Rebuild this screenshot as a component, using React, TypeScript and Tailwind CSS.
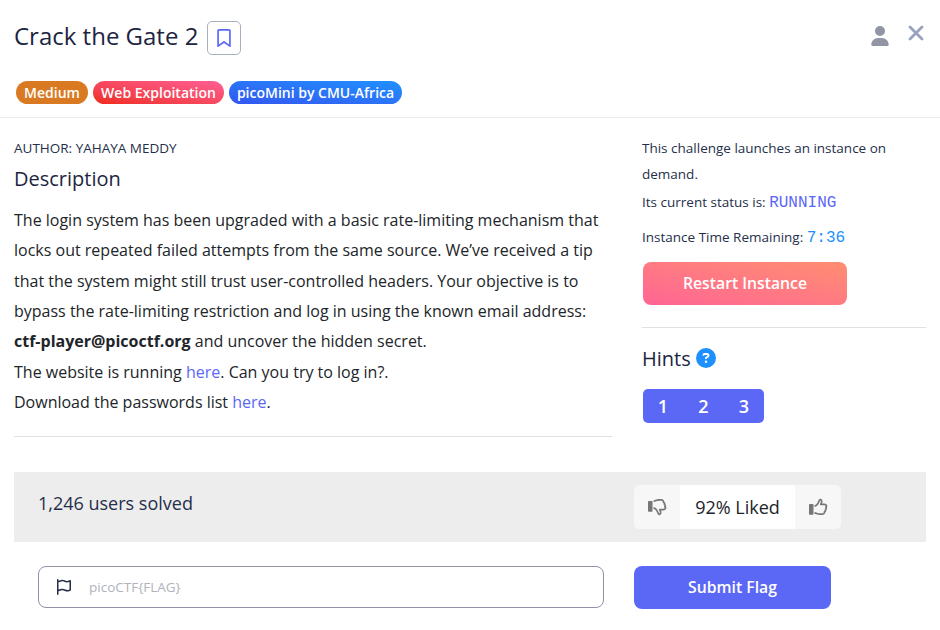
import React from "react";
import { FaUser, FaRegBookmark, FaRegFlag, FaCircleQuestion } from "react-icons/fa6";

function Thumb({ down = false }: { down?: boolean }) {
  return (
    <svg viewBox="0 0 20 20" className={down ? "size-5 -scale-y-100" : "size-5"} fill="none">
      <rect x="1" y={down ? 5.3 : 7} width="4.500" height="10.800" rx=".8" fill="#777" />
      <path d="M6.500 9.300 L8 8.600 C9.500 7.300 10.700 6 11.200 3.600 C11.500 2.300 13.700 2.200 13.700 4.500 C13.700 5.600 13 6.500 12.800 7.400 H16.500 C18.600 7.400 18.900 9.200 17.900 10.200 C18.500 11.100 18.100 12.100 17.400 12.600 C17.700 13.600 17.200 14.400 16.500 14.700 C16.600 16.200 15.700 17.200 14 17.200 H12 C9.500 17.200 8.500 16 6.500 15.800" stroke="#777" strokeWidth="1.700" strokeLinejoin="round" />
    </svg>
  );
}

export default function App() {
  return (
    <main className="h-[630px] w-[940px] overflow-hidden bg-white font-['Open_Sans',sans-serif] text-[#212529]">
      <header className="h-[118px] border-b border-[#e9ecef] px-[14px] pt-[21px]">
        <div className="flex h-[34px] items-start justify-between">
          <div className="flex">
            <h1 className="text-2xl leading-[29px] text-[#1d253f]">Crack the Gate 2</h1>
            <button className="ml-[9px] flex h-[34px] w-[34px] items-center justify-center rounded-[5px] border border-[#a9afbd] text-[#5b68f6]">
              <FaRegBookmark className="size-[18px]" />
            </button>
          </div>
          <div className="flex items-start">
            <FaUser className="mt-[5px] size-5 text-[#9295a3]" />
            <svg viewBox="0 0 16 16" className="mt-[4px] mr-[2px] ml-[18px] size-4" stroke="#98a1bd" strokeWidth="2.800" strokeLinecap="round">
              <path d="M2 2 L14 14 M14 2 L2 14" />
            </svg>
          </div>
        </div>
        <div className="mt-[26px] flex gap-[5px] pl-[2px] text-sm leading-[23px] font-semibold text-white">
          <span className="w-[72px] rounded-full bg-[#d97a22] text-center">Medium</span>
          <span className="w-[131px] rounded-full bg-linear-to-tr from-[#f02916] to-[#ff5f94] text-center">Web Exploitation</span>
          <span className="w-[173px] rounded-full bg-linear-to-tr from-[#3355f0] to-[#1e90ff] text-center">picoMini by CMU-Africa</span>
        </div>
      </header>
      <div className="flex h-[354px] px-[14px]">
        <section className="w-[598px]">
          <p className="mt-[17px] text-[13.5px] leading-[26px] text-[#252f4a]">AUTHOR: YAHAYA MEDDY</p>
          <h2 className="mt-[5px] text-xl leading-[26px] text-[#1d253f]">Description</h2>
          <p className="mt-[12.8px] text-base leading-[30.4px] whitespace-nowrap">
            The login system has been upgraded with a basic rate-limiting mechanism that<br />
            locks out repeated failed attempts from the same source. We’ve received a tip<br />
            that the system might still trust user-controlled headers. Your objective is to<br />
            bypass the rate-limiting restriction and log in using the known email address:<br />
            <strong>ctf-player@picoctf.org</strong> and uncover the hidden secret.<br />
            The website is running <a className="text-[#5b68f6]">here</a>. Can you try to log in?.<br />
            Download the passwords list <a className="text-[#5b68f6]">here</a>.
          </p>
          <hr className="mt-[18.2px] border-[#e0e0e1]" />
        </section>
        <aside className="ml-[30px] w-[284px] text-[13.5px] text-[#252f4a]">
          <p className="mt-[17px] leading-[26px]">This challenge launches an instance on<br />demand.</p>
          <p className="mt-[2px] h-[26px] leading-[26px]">Its current status is: <span className="font-['Liberation_Mono',monospace] text-base leading-none text-[#5b68f6]">RUNNING</span></p>
          <p className="mt-[9px] h-[26px] leading-[26px]">Instance Time Remaining: <span className="font-['Liberation_Mono',monospace] text-base leading-none text-[#1e8fff]">7:36</span></p>
          <button className="mt-[12px] ml-px block h-[43px] w-[204px] rounded-lg bg-linear-to-tr from-[#ff6493] to-[#ff8d70] text-[15.75px] font-semibold text-white">Restart Instance</button>
          <hr className="mt-[22px] border-[#e0e0e1]" />
          <div className="mt-[17px] flex h-[26px] items-center">
            <h2 className="mt-[2px] text-xl leading-[26px] text-[#1d253f]">Hints</h2>
            <FaCircleQuestion className="ml-[5px] size-5 text-[#1e8fff]" />
          </div>
          <div className="mt-[18px] ml-px flex h-[34px] w-[121px] items-center rounded-[5px] bg-[#5b68f6] text-lg font-semibold text-white">
            <button className="w-10">1</button><button className="w-[41px]">2</button><button className="w-10">3</button>
          </div>
        </aside>
      </div>
      <section className="mx-[14px] flex h-[70px] bg-[#ededed] pl-6">
        <p className="mt-[18px] w-[596px] text-lg leading-[27px] text-[#252f4a]">1,246 users solved</p>
        <div className="mt-[13px] flex h-[44px] w-[207px] overflow-hidden rounded-[5px] bg-[#f7f7f7]">
          <button className="flex w-[46px] items-center justify-center"><Thumb down /></button>
          <span className="w-[115px] bg-white text-center text-lg leading-[44px]">92% Liked</span>
          <button className="flex w-[46px] items-center justify-center"><Thumb /></button>
        </div>
      </section>
      <form className="flex px-[38px] pt-6">
        <div className="flex h-[42px] w-[566px] items-center rounded-lg border border-[#8f92a5] pl-[17px]">
          <FaRegFlag className="size-4 text-[#252f4a]" />
          <span className="mt-px ml-[17px] text-[13.5px] text-[#b0b2bc]">picoCTF&#123;FLAG&#125;</span>
        </div>
        <button type="button" className="ml-[30px] h-[43px] w-[197px] rounded-lg bg-[#5b68f6] text-[15.75px] font-semibold text-white">Submit Flag</button>
      </form>
    </main>
  );
}
